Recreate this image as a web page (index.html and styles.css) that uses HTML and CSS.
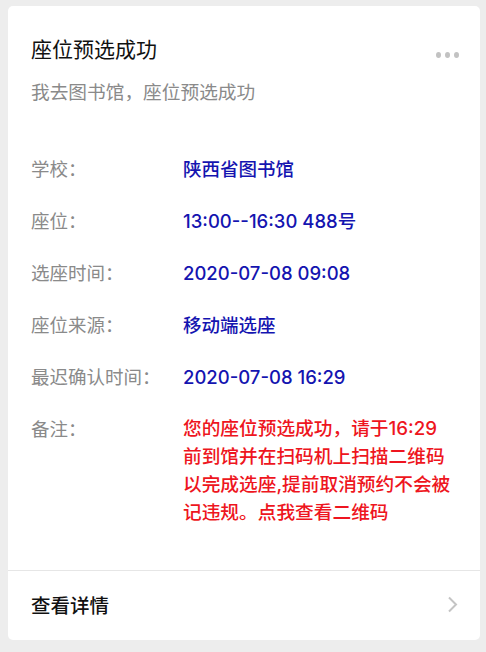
FILE: index.html
```html
<!DOCTYPE html>
<html lang="zh-CN">
<head>
<meta charset="utf-8">
<title>座位预选成功</title>
<link rel="stylesheet" href="styles.css">
</head>
<body>
<div class="card">
  <div class="main">
    <div class="head">
      <div class="title">座位预选成功</div>
      <div class="dots"><span></span><span></span><span></span></div>
    </div>
    <div class="subtitle">我去图书馆，座位预选成功</div>
    <div class="rows">
      <div class="row"><div class="label">学校：</div><div class="value">陕西省图书馆</div></div>
      <div class="row"><div class="label">座位：</div><div class="value">13:00--16:30 488号</div></div>
      <div class="row"><div class="label">选座时间：</div><div class="value">2020-07-08 09:08</div></div>
      <div class="row"><div class="label">座位来源：</div><div class="value">移动端选座</div></div>
      <div class="row"><div class="label">最迟确认时间：</div><div class="value">2020-07-08 16:29</div></div>
      <div class="row"><div class="label">备注：</div><div class="value red">您的座位预选成功，请于16:29<br>前到馆并在扫码机上扫描二维码<br>以完成选座,提前取消预约不会被<br>记违规。点我查看二维码</div></div>
    </div>
  </div>
  <div class="footer">
    <div class="footer-text">查看详情</div>
    <svg class="chev" width="11" height="17" viewBox="0 0 11 17"><path d="M2 1.5 L9 8.5 L2 15.5" fill="none" stroke="#c4c4c4" stroke-width="2"/></svg>
  </div>
</div>
</body>
</html>
```
FILE: styles.css
```css
html, body {
  margin: 0;
  padding: 0;
  background: #ededed;
}
body {
  font-family: "Inter", "Noto Sans CJK SC", "Noto Sans", sans-serif;
  padding: 6px 6px 12px 8px;
}
.card {
  width: 472px;
  height: 634px;
  background: #fff;
  border-radius: 5px;
  display: flex;
  flex-direction: column;
  overflow: hidden;
}
.main {
  flex: 1;
  padding: 30px 21px 0 23px;
}
.head {
  display: flex;
  justify-content: space-between;
  align-items: center;
}
.title {
  font-size: 21px;
  line-height: 28px;
  color: #111;
}
.dots {
  display: flex;
  gap: 4px;
  margin-top: 10px;
}
.dots span {
  width: 5px;
  height: 6px;
  border-radius: 50%;
  background: #c2c2c2;
}
.subtitle {
  margin-top: 15px;
  font-size: 18.7px;
  line-height: 28px;
  color: #8a8a8a;
}
.rows {
  margin-top: 48px;
  display: flex;
  flex-direction: column;
  gap: 24px;
}
.row {
  display: flex;
  font-size: 18.5px;
  line-height: 28px;
}
.label {
  width: 152px;
  flex-shrink: 0;
  color: #8a8a8a;
}
.value {
  color: #1414b0;
  font-weight: 500;
}
.value.red {
  color: #ee1520;
  white-space: nowrap;
  font-size: 18.7px;
  line-height: 28px;
}
.footer {
  height: 67px;
  border-top: 1px solid #e6e6e6;
  display: flex;
  align-items: center;
  justify-content: space-between;
  padding: 0 22px 2px 23px;
}
.footer-text {
  font-size: 19.5px;
  color: #111;
  font-weight: 500;
}
.chev {
  display: block;
}
```
